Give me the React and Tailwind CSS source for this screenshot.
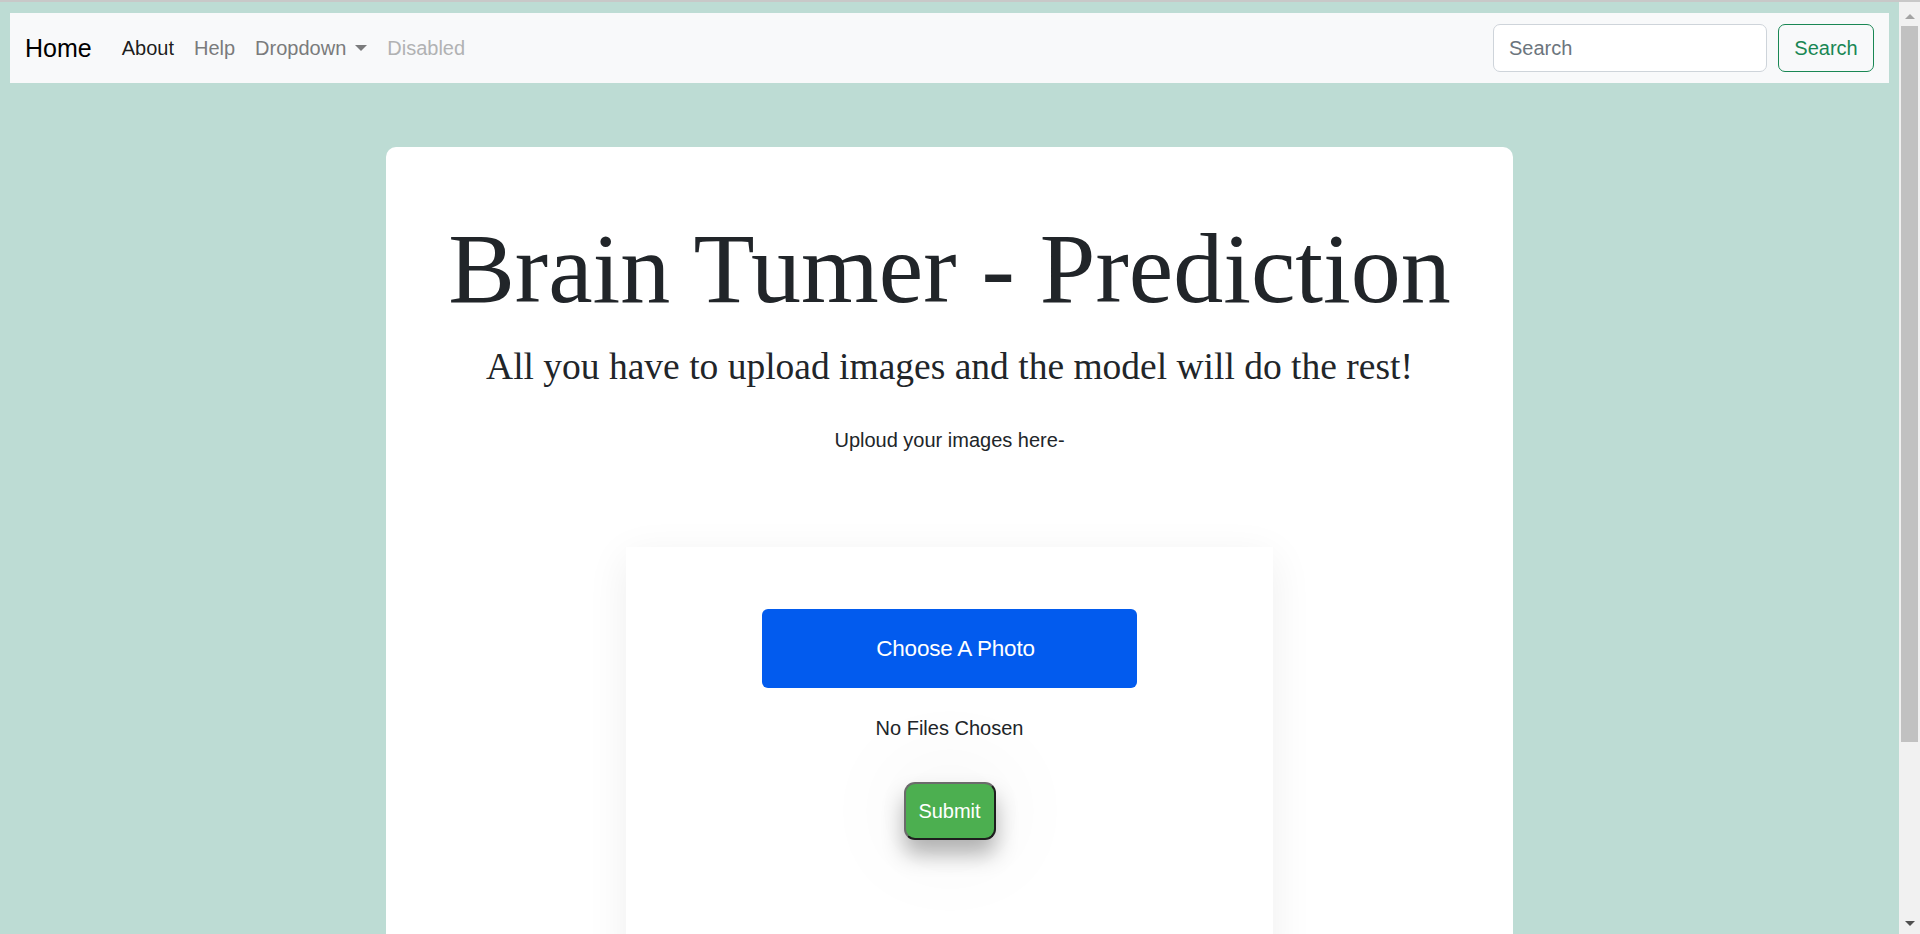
const sans = { fontFamily: '"Liberation Sans", Arial, sans-serif' }
const serif = { fontFamily: '"Liberation Serif", "Times New Roman", serif' }

function Navbar() {
  return (
    <nav className="mx-[10px] mt-[11px] h-[70px] bg-[#f8f9fa] px-[15px] flex items-center justify-between">
      <div className="flex items-center">
        <a className="text-[25px] text-black mr-[20px] leading-none">Home</a>
        <ul className="flex items-center text-[20px]">
          <li className="px-[10px] text-[#000000e6]">About</li>
          <li className="px-[10px] text-[#7a7b7c]">Help</li>
          <li className="px-[10px] text-[#7a7b7c] flex items-center">
            Dropdown
            <span className="ml-[9px] w-0 h-0 border-l-[6px] border-r-[6px] border-t-[6px] border-l-transparent border-r-transparent border-t-[#7a7b7c]" />
          </li>
          <li className="px-[10px] text-[#b1b2b3]">Disabled</li>
        </ul>
      </div>
      <form className="flex items-center gap-[11px]" onSubmit={(e) => e.preventDefault()}>
        <input
          type="search"
          placeholder="Search"
          className="w-[274px] h-[48px] rounded-[7px] border border-[#ced4da] bg-white px-[15px] text-[20px] placeholder:text-[#6c757d] outline-none"
        />
        <button className="h-[48px] w-[96px] rounded-[7px] border border-[#198754] text-[#198754] text-[20px]">
          Search
        </button>
      </form>
    </nav>
  )
}

function UploadBox() {
  return (
    <div className="mx-auto mt-[92px] w-[647px] h-[420px] bg-white shadow-[0_10px_40px_rgba(0,0,0,0.07)] pt-[62px] flex flex-col items-center">
      <button className="w-[375px] h-[79px] rounded-[6px] bg-[#025bee] text-white text-[22.5px] pl-[12px] tracking-[-0.2px]">
        Choose A Photo
      </button>
      <p className="mt-[25px] text-[20px] leading-[30px] text-[#212529]">No Files Chosen</p>
      <button className="mt-[39px] w-[92px] h-[58px] rounded-[11px] bg-[#4caf50] text-white text-[20px] border-2 border-t-[#6b6b6b] border-l-[#6b6b6b] border-r-[#1e1e1e] border-b-[#1e1e1e] shadow-[0_14px_22px_rgba(0,0,0,0.3),0_0_100px_rgba(0,0,0,0.08)]">
        Submit
      </button>
    </div>
  )
}

function Scrollbar() {
  return (
    <div className="w-[21px] bg-[#f1f1f1] flex flex-col items-center">
      <span className="mt-[12px] w-0 h-0 border-l-[5px] border-r-[5px] border-b-[5px] border-l-transparent border-r-transparent border-b-[#a3a3a3]" />
      <div className="mt-[7px] w-[17px] h-[716px] bg-[#c1c1c1]" />
      <span className="mt-auto mb-[8px] w-0 h-0 border-l-[5px] border-r-[5px] border-t-[5px] border-l-transparent border-r-transparent border-t-[#505050]" />
    </div>
  )
}

export default function App() {
  return (
    <div className="h-[934px] overflow-hidden flex flex-col bg-[#bddcd4]" style={sans}>
      <div className="h-[2px] shrink-0 bg-[#c8c8c8]" />
      <div className="flex-1 flex min-h-0">
        <main className="flex-1 overflow-hidden">
          <Navbar />
          <section className="mx-auto mt-[64px] w-[1127px] h-[900px] rounded-[10px] bg-white pt-[62px] text-center">
            <h1 className="text-[100px] leading-[1.2] text-[#212529]" style={serif}>
              Brain Tumer - Prediction
            </h1>
            <h3 className="mt-[15px] text-[37.5px] leading-[1.2] text-[#212529]" style={serif}>
              All you have to upload images and the model will do the rest!
            </h3>
            <p className="mt-[36px] text-[20px] leading-[30px] text-[#212529]">Uploud your images here-</p>
            <UploadBox />
          </section>
        </main>
        <Scrollbar />
      </div>
    </div>
  )
}
